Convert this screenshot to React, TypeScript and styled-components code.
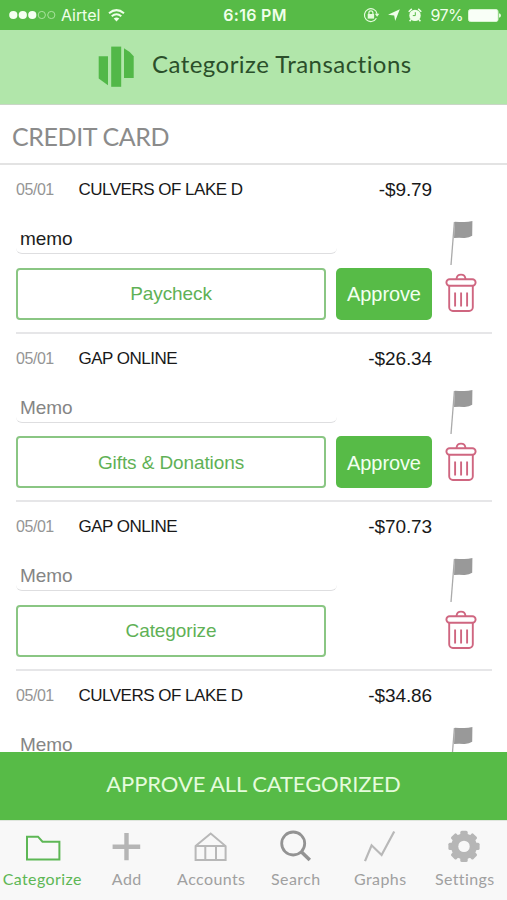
import React from 'react';
import styled, { createGlobalStyle, css } from 'styled-components';

const green = '#57bb47';
const humanist = css`font-family: Lato, 'Open Sans', sans-serif;`;
const grotesque = css`font-family: 'Liberation Sans', Arial, sans-serif;`;

const Global = createGlobalStyle`
  * { box-sizing: border-box; }
  body { margin: 0; background: #fff; }
  button { border: 0; background: none; padding: 0; margin: 0; }
  svg { display: block; flex: none; }
`;

const Screen = styled.div`
  width: 507px;
  height: 900px;
  display: flex;
  flex-direction: column;
  overflow: hidden;
  background: #fff;
  ${grotesque}
`;

const StatusBar = styled.div`
  height: 30px;
  flex: none;
  display: grid;
  grid-template-columns: 1fr auto 1fr;
  align-items: center;
  padding: 0 6px 0 9px;
  background: ${green};
  color: #f0ffea;
  font: 400 16px/30px Inter, Roboto, sans-serif;
  white-space: nowrap;
`;
const Carrier = styled.div`
  display: flex;
  align-items: center;
  letter-spacing: -0.05px;
`;
const CarrierName = styled.span`
  margin: 0 8px 0 5px;
`;
const Clock = styled.div`
  font-weight: 600;
  letter-spacing: 0.3px;
`;
const Indicators = styled.div`
  display: flex;
  align-items: center;
  justify-content: flex-end;
`;
const Percent = styled.span`
  letter-spacing: -0.6px;
  margin: 0 5px 0 8px;
`;
const Spacer = styled.span<{ $w: number }>`
  width: ${p => p.$w}px;
`;

const Header = styled.header`
  height: 75px;
  flex: none;
  display: flex;
  padding: 16px 0 0 98px;
  background: #b1e6aa;
  border-bottom: 1px solid #c9d6c6;
`;
const Title = styled.h1`
  ${humanist}
  margin: 0 0 0 18px;
  font-size: 24px;
  line-height: 36px;
  font-weight: 400;
  letter-spacing: 0.46px;
  color: #2b4f2a;
  white-space: nowrap;
`;

const Section = styled.h2`
  ${humanist}
  height: 60px;
  flex: none;
  margin: 0;
  padding: 2px 0 0 12px;
  font-size: 25px;
  line-height: 58px;
  font-weight: 400;
  letter-spacing: -0.4px;
  color: #8b8b8b;
  border-bottom: 2px solid #e3e3e3;
  white-space: nowrap;
`;

const List = styled.main`
  flex: 1;
  min-height: 0;
  overflow: hidden;
  padding: 0 15px 0 16px;
`;
const Row = styled.article`
  height: 168.6px;
  display: grid;
  grid-template-columns: 416px 1fr;
  border-bottom: 2px solid #e6e6e8;
`;
const Details = styled.div`
  display: flex;
  flex-direction: column;
`;
const Summary = styled.div`
  display: flex;
  height: 50px;
  line-height: 49px;
  white-space: nowrap;
`;
const DateText = styled.span`
  width: 62.5px;
  font-size: 16px;
  letter-spacing: -0.45px;
  color: #959595;
`;
const Payee = styled.span`
  flex: 1;
  font-size: 17px;
  letter-spacing: -0.5px;
  color: #191919;
`;
const Amount = styled.span`
  font-size: 19px;
  letter-spacing: -0.1px;
  line-height: 50px;
  color: #191919;
`;
const Memo = styled.div<{ $filled?: boolean }>`
  width: 321px;
  height: 31px;
  margin-top: 8px;
  padding-left: 4px;
  font-size: 19px;
  letter-spacing: -0.1px;
  line-height: 32px;
  color: ${p => (p.$filled ? '#1d1d1d' : '#858585')};
  border-bottom: 1.5px solid #dedee0;
  border-radius: 6px;
`;
const Actions = styled.div`
  display: flex;
  gap: 10px;
  margin-top: 13.5px;
`;
const CategoryButton = styled.button`
  width: 310px;
  height: 52px;
  border: 2px solid #8ac683;
  border-radius: 4px;
  color: #5fb156;
  font-size: 19px;
  letter-spacing: -0.1px;
  padding-top: 1px;
  ${grotesque}
`;
const ApproveButton = styled.button`
  width: 96px;
  height: 52px;
  padding-top: 2px;
  border-radius: 5px;
  background: ${green};
  color: #f2fff0;
  font-size: 20px;
  letter-spacing: -0.1px;
  ${grotesque}
`;
const RowTools = styled.div`
  display: flex;
  flex-direction: column;
  gap: 8px;
  padding: 54px 0 0 13px;
`;

const ApproveAll = styled.button`
  ${humanist}
  height: 68px;
  flex: none;
  background: ${green};
  color: #e5fbdc;
  font-size: 22px;
  letter-spacing: -0.1px;
  padding-bottom: 6px;
  white-space: nowrap;
`;
const TabBar = styled.nav`
  height: 80px;
  flex: none;
  display: grid;
  grid-template-columns: repeat(6, 1fr);
  background: #f8f8f8;
  border-top: 1px solid #dfe6dd;
`;
const Tab = styled.button<{ $active?: boolean }>`
  ${humanist}
  display: flex;
  flex-direction: column;
  align-items: center;
  padding-top: 8px;
  font-size: 16px;
  line-height: 22px;
  letter-spacing: 0.4px;
  white-space: nowrap;
  color: ${p => (p.$active ? '#5db755' : '#a0a0a0')};
`;
const TabLabel = styled.span`
  margin-top: 3px;
`;

const Signal = () => (
  <svg width="47" height="10" viewBox="0 0 47 10">
    {[4.3, 13.8, 23.3].map(x => <circle key={x} cx={x} cy="5" r="4.1" fill="#f5fff2" />)}
    {[32.8, 42.3].map(x => <circle key={x} cx={x} cy="5" r="3.6" fill="none" stroke="#a9e39d" strokeWidth="1" />)}
  </svg>
);
const Wifi = () => (
  <svg width="17" height="13" viewBox="0 0 17 13" fill="none" stroke="#f0ffea" strokeWidth="2">
    <path d="M1 4.3Q8.5-2 16 4.3M3.7 7.3Q8.5 3.3 13.3 7.3" />
    <path d="M5.7 9.6Q8.5 7.2 11.3 9.6L8.5 12.5Z" fill="#f0ffea" stroke="none" />
  </svg>
);
const RotationLock = () => (
  <svg width="17" height="16" viewBox="0 0 17 16" fill="none" stroke="#e4fbdc" strokeWidth="1.2">
    <path d="M13.4 11.3A6.4 6.4 0 1 1 14.1 6.8" />
    <path d="M11.8 6.8H16.4L14.1 9.7Z" fill="#e4fbdc" stroke="none" />
    <rect x="4.7" y="7" width="6.4" height="4.6" fill="#e4fbdc" stroke="none" />
    <path d="M5.9 7V5.8a2 2 0 0 1 4 0V7" />
  </svg>
);
const LocationArrow = () => (
  <svg width="12" height="12" viewBox="0 0 12 12"><path d="M11.8.2 7.2 12 6.2 6.6 0 5.7Z" fill="#f0ffea" /></svg>
);
const Alarm = () => (
  <svg width="14" height="14" viewBox="0 0 14 14">
    <circle cx="7" cy="7.4" r="5.7" fill="#f0ffea" />
    <path d="M.7 3.7 3.8.9M13.3 3.7 10.2.9M3 11.5 1.6 13.2M11 11.5l1.4 1.7" stroke="#f0ffea" strokeWidth="1.5" />
    <path d="M7.3 4.2V7.6H4.8" fill="none" stroke={green} strokeWidth="1" />
  </svg>
);
const Battery = () => (
  <svg width="33" height="13" viewBox="0 0 33 13">
    <rect x=".5" y=".5" width="29.5" height="12" rx="2" fill="#f9fff7" stroke="#d8f5d0" strokeWidth="1" />
    <path d="M31 4.2q2 .3 2 2.3t-2 2.3Z" fill="#e4fbdc" />
  </svg>
);
const Logo = () => (
  <svg width="36" height="42" viewBox="0 0 36 42" fill="#52b848">
    <path d="M.7 10.3H10V39.3L.7 32.5Z" />
    <path d="M13.2.6h10v40.2h-10Z" />
    <path d="M26 2.2Q31.5 5 35.7 10.3V32H26Z" />
  </svg>
);
const Flag = () => (
  <svg width="30" height="46" viewBox="0 0 30 46">
    <path d="M9.4 3 6 46" stroke="#aaa" strokeWidth="1.3" />
    <path d="M9.8 2.8Q14 3 18.5 3.1T27.4 2L27.2 16.8Q24 19.2 18.5 18.9T9 19Z" fill="#999" />
  </svg>
);
const Trash = () => (
  <svg width="32" height="40" viewBox="0 0 32 40" fill="none" stroke="#cf6680" strokeWidth="1.9">
    <rect x="1.4" y="6.2" width="29.2" height="6.5" rx="3.2" />
    <path d="M11.5 6C12 .2 20 .2 20.5 6M4.2 12.8V34.3a3.7 3.7 0 0 0 3.7 3.7H24.1a3.7 3.7 0 0 0 3.7-3.7V12.8M10.1 19.6v14M16.1 19.6v14M22.1 19.6v14" />
  </svg>
);

const tabIcons = {
  folder: <path d="M5 7.7H16L20.5 12.7H37.4V30.5H5Z" fill="none" stroke="#5db755" strokeWidth="2" />,
  plus: <path d="M19.5 4V31.3M5.6 17.7H33.2" fill="none" stroke="#b5b5b5" strokeWidth="4.4" />,
  bank: <path d="M4.6 17.1 19.7 4.6 34.6 17.1V30.9H4.6ZM4.6 17.1H34.6M14.3 17.1V30.9M25 17.1V30.9" fill="none" stroke="#b8b8b8" strokeWidth="2" />,
  search: <><circle cx="17.2" cy="14.5" r="11.5" fill="none" stroke="#939393" strokeWidth="2.8" /><path d="M25.3 22.8 33.8 31" stroke="#939393" strokeWidth="3.6" /></>,
  graph: <path d="M5 32.2 11.6 16.3 21.6 26 34.2 2.6" fill="none" stroke="#b8b8b8" strokeWidth="2.2" />,
  gear: (
    <g transform="translate(-1 -.6)">
      {[0, 45, 90, 135].map(a => (
        <rect key={a} x="16.3" y="2.4" width="7.4" height="31.2" rx="1.6" fill="#b6b6b6" transform={`rotate(${a} 20 18)`} />
      ))}
      <circle cx="20" cy="18" r="12.9" fill="#b6b6b6" />
      <circle cx="20" cy="18" r="5.7" fill="#f8f8f8" />
    </g>
  ),
};

const tabs: { icon: keyof typeof tabIcons; label: string }[] = [
  { icon: 'folder', label: 'Categorize' },
  { icon: 'plus', label: 'Add' },
  { icon: 'bank', label: 'Accounts' },
  { icon: 'search', label: 'Search' },
  { icon: 'graph', label: 'Graphs' },
  { icon: 'gear', label: 'Settings' },
];

type Transaction = { payee: string; amount: string; memo?: string; category?: string; approvable?: boolean };

const transactions: Transaction[] = [
  { payee: 'CULVERS OF LAKE D', amount: '-$9.79', memo: 'memo', category: 'Paycheck', approvable: true },
  { payee: 'GAP ONLINE', amount: '-$26.34', category: 'Gifts & Donations', approvable: true },
  { payee: 'GAP ONLINE', amount: '-$70.73', category: 'Categorize' },
  { payee: 'CULVERS OF LAKE D', amount: '-$34.86' },
];

export default function App() {
  return (
    <Screen>
      <Global />
      <StatusBar>
        <Carrier><Signal /><CarrierName>Airtel</CarrierName><Wifi /></Carrier>
        <Clock>6:16 PM</Clock>
        <Indicators>
          <RotationLock /><Spacer $w={8} /><LocationArrow /><Spacer $w={8} /><Alarm />
          <Percent>97%</Percent><Battery />
        </Indicators>
      </StatusBar>
      <Header><Logo /><Title>Categorize Transactions</Title></Header>
      <Section>CREDIT CARD</Section>
      <List>
        {transactions.map((t, i) => (
          <Row key={i}>
            <Details>
              <Summary>
                <DateText>05/01</DateText><Payee>{t.payee}</Payee><Amount>{t.amount}</Amount>
              </Summary>
              <Memo $filled={!!t.memo}>{t.memo || 'Memo'}</Memo>
              <Actions>
                {t.category && <CategoryButton>{t.category}</CategoryButton>}
                {t.approvable && <ApproveButton>Approve</ApproveButton>}
              </Actions>
            </Details>
            <RowTools><Flag /><Trash /></RowTools>
          </Row>
        ))}
      </List>
      <ApproveAll>APPROVE ALL CATEGORIZED</ApproveAll>
      <TabBar>
        {tabs.map((t, i) => (
          <Tab key={t.label} $active={i === 0}>
            <svg width="40" height="36" viewBox="0 0 40 36">{tabIcons[t.icon]}</svg>
            <TabLabel>{t.label}</TabLabel>
          </Tab>
        ))}
      </TabBar>
    </Screen>
  );
}
